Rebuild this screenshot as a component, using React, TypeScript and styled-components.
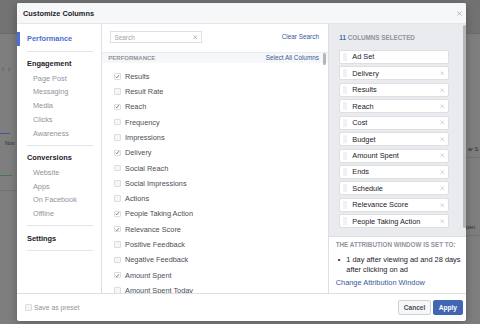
import React from 'react'
import styled, { createGlobalStyle, css } from 'styled-components'

const GlobalStyle = createGlobalStyle`
	html, body {
		margin: 0;
		padding: 0;
	}
	body {
		width: 480px;
		height: 324px;
		overflow: hidden;
		background: #7e7e7e;
		font-family: "Liberation Sans", Arial, sans-serif;
	}
	* {
		box-sizing: border-box;
	}
`

// BACKGROUND PAGE (seen through the overlay)
const Screen = styled.div`
	position: relative;
	width: 480px;
	height: 324px;
	overflow: hidden;
	background: #7e7e7e;
`
const BgTop = styled.div`
	height: 34px;
	background: #727272;
	border-bottom: 1px solid #6b6b6b;
`
const BgRow = styled.div`
	display: flex;
	justify-content: space-between;
`
const BgStrip = styled.div<{ w: number }>`
	width: ${({ w }) => w}px;
	display: flex;
	flex-direction: column;
`
const BgText = styled.div<{ mt: number; ml: number; color: string }>`
	margin-top: ${({ mt }) => mt}px;
	margin-left: ${({ ml }) => ml}px;
	font-size: 5.5px;
	line-height: 7px;
	color: ${({ color }) => color};
	white-space: nowrap;
`
const BgLine = styled.div<{ mt: number; w: number; color: string }>`
	margin-top: ${({ mt }) => mt}px;
	width: ${({ w }) => w}px;
	height: 1px;
	background: ${({ color }) => color};
`

// MODAL
const Overlay = styled.div`
	position: absolute;
	inset: 0;
	display: flex;
	align-items: flex-start;
	padding: 3px 0 0 17px;
`
const Modal = styled.div`
	width: 449px;
	height: 318px;
	background: #fff;
	border-radius: 2px;
	box-shadow: 0 2px 8px rgba(0, 0, 0, 0.25);
	display: flex;
	flex-direction: column;
	overflow: hidden;
`
const Header = styled.div`
	flex: none;
	height: 21px;
	display: flex;
	align-items: center;
	justify-content: space-between;
	padding: 0 4px 0 6px;
	background: #f6f7f9;
	border-bottom: 1px solid #e5e6e9;
`
const Title = styled.div`
	font-size: 7.4px;
	font-weight: bold;
	color: #1d2129;
`
const Body = styled.div`
	flex: 1;
	display: flex;
	min-height: 0;
`

// LEFT NAV
const Nav = styled.div`
	flex: none;
	width: 85px;
	border-right: 1px solid #dddfe2;
	padding-top: 2.8px;
`
const NavSection = styled.div`
	margin: 0 8px 0 10px;
	padding: 5.5px 0 4.5px;
	border-bottom: 1px solid #e5e6e9;
`
const NavHeading = styled.div<{ $active?: boolean }>`
	position: relative;
	font-size: 7.4px;
	font-weight: bold;
	line-height: 13.7px;
	color: ${({ $active }) => ($active ? '#4b6fd5' : '#1d2129')};
	${({ $active }) =>
		$active &&
		css`
			&::before {
				content: '';
				position: absolute;
				left: -10px;
				top: 0;
				bottom: 0;
				width: 2.5px;
				background: #4b6fd5;
			}
		`}
`
const NavItems = styled.div`
	padding-top: 1px;
`
const NavItem = styled.div`
	padding-left: 6px;
	font-size: 7.3px;
	line-height: 13.7px;
	color: #90949c;
`

// MIDDLE
const Middle = styled.div`
	flex: none;
	width: 227px;
	border-right: 1px solid #dddfe2;
	display: flex;
	flex-direction: column;
`
const SearchRow = styled.div`
	flex: none;
	height: 27.7px;
	padding: 7px 9px 0 8px;
	display: flex;
	justify-content: space-between;
	align-items: flex-start;
`
const SearchBox = styled.div`
	width: 92px;
	height: 12.3px;
	border: 1px solid #dddfe2;
	display: flex;
	align-items: center;
	justify-content: space-between;
	padding: 0 4px 0 3.5px;
	font-size: 6.4px;
	color: #a0a3a9;
`
const Link = styled.div`
	font-size: 6.4px;
	color: #365899;
	line-height: 12.3px;
	white-space: nowrap;
`
const ListArea = styled.div`
	position: relative;
	flex: 1;
	overflow: hidden;
`
const Band = styled.div`
	height: 11.6px;
	background: #f6f7f9;
	border-top: 1px solid #e9ebee;
	display: flex;
	align-items: center;
	justify-content: space-between;
	padding: 0 9px 0 6.3px;
`
const SmallCaps = styled.div`
	font-size: 6px;
	font-weight: bold;
	color: #90949c;
	white-space: nowrap;
`
const Options = styled.div`
	padding: 5.35px 0 0 12.3px;
`
const Option = styled.div`
	height: 15.31px;
	display: flex;
	align-items: center;
	gap: 4.2px;
	font-size: 7.35px;
	color: #4b4f56;
	white-space: nowrap;
`
const Box = styled.span<{ $checked?: boolean }>`
	flex: none;
	width: 6.5px;
	height: 6.5px;
	border: 1px solid #dadde1;
	border-radius: 1px;
	background: ${({ $checked }) => ($checked ? '#fff' : '#f5f6f7')};
	display: flex;
	align-items: center;
	justify-content: center;
`
const Thumb = styled.div<{ top: number; right: number; h: number }>`
	position: absolute;
	top: ${({ top }) => top}px;
	right: ${({ right }) => right}px;
	width: 3.4px;
	height: ${({ h }) => h}px;
	border-radius: 2px;
	background: #b4b6ba;
`

// RIGHT
const Right = styled.div`
	flex: 1;
	display: flex;
	flex-direction: column;
`
const Selected = styled.div`
	position: relative;
	flex: none;
	height: 212px;
	background: #e9ebee;
	padding: 10.3px 0 0 10.3px;
`
const SelectedTitle = styled.div`
	font-size: 6.3px;
	font-weight: bold;
	line-height: 8px;
	color: #90949c;
	margin-bottom: 7.7px;
	span {
		color: #4267b2;
	}
`
const Chip = styled.div`
	width: 110px;
	height: 14px;
	margin-bottom: 2.43px;
	background: #fff;
	border: 1px solid #dddfe2;
	border-radius: 2px;
	display: flex;
	align-items: center;
	padding: 0 4px 0 3px;
	font-size: 7.35px;
	color: #1d2129;
	white-space: nowrap;
`
const ChipLabel = styled.span`
	flex: 1;
	margin-left: 5px;
`
const Attribution = styled.div`
	flex: 1;
	border-top: 1px solid #dddfe2;
	padding: 4px 3px 0 6.7px;
`
const AttrTitle = styled.div`
	font-size: 6.3px;
	font-weight: bold;
	line-height: 8px;
	color: #90949c;
	white-space: nowrap;
`
const Bullet = styled.div`
	display: flex;
	margin-top: 6.3px;
	font-size: 7.4px;
	line-height: 9.3px;
	color: #1d2129;
`
const Dot = styled.span`
	flex: none;
	width: 10.6px;
	padding-left: 2px;
`
const AttrLink = styled.div`
	margin-top: 4px;
	font-size: 7.4px;
	line-height: 9.4px;
	color: #365899;
	white-space: nowrap;
`

// FOOTER
const Footer = styled.div`
	flex: none;
	height: 28px;
	border-top: 1px solid #dddfe2;
	display: flex;
	align-items: center;
	justify-content: space-between;
	padding: 0 3.3px 0 8px;
`
const Preset = styled.div`
	display: flex;
	align-items: center;
	gap: 2.5px;
	font-size: 6.8px;
	color: #90949c;
`
const Buttons = styled.div`
	display: flex;
	gap: 2px;
`
const Button = styled.div<{ primary?: boolean; w: number }>`
	width: ${({ w }) => w}px;
	height: 15.3px;
	border-radius: 2px;
	display: flex;
	align-items: center;
	justify-content: center;
	font-size: 6.6px;
	font-weight: bold;
	${({ primary }) =>
		primary
			? css`
					background: #4267b2;
					border: 1px solid #4267b2;
					color: #fff;
			  `
			: css`
					background: #f6f7f9;
					border: 1px solid #ced0d4;
					color: #4b4f56;
			  `}
`

const Cross = ({ size = 5, color = '#90949c' }: { size?: number; color?: string }) => (
	<svg width={size} height={size} viewBox='0 0 10 10' style={{ flex: 'none' }}>
		<path d='M1 1L9 9M9 1L1 9' stroke={color} strokeWidth={1.6} fill='none' />
	</svg>
)

const Check = () => (
	<svg width={5} height={5} viewBox='0 0 10 10'>
		<path d='M1.5 5.5L4 8L8.8 2' stroke='#4b4f56' strokeWidth={1.6} fill='none' />
	</svg>
)

const Handle = () => (
	<svg width={4} height={8} viewBox='0 0 4 8' style={{ flex: 'none' }}>
		{[1, 3, 5, 7].map(y =>
			[1, 3].map(x => <circle key={`${x}-${y}`} cx={x} cy={y} r={0.6} fill='#bec2c9' />)
		)}
	</svg>
)

const NAV = [
	{ title: 'Performance', active: true, items: [] as string[] },
	{ title: 'Engagement', items: ['Page Post', 'Messaging', 'Media', 'Clicks', 'Awareness'] },
	{ title: 'Conversions', items: ['Website', 'Apps', 'On Facebook', 'Offline'] },
	{ title: 'Settings', items: [] as string[] },
]

const OPTIONS: [string, boolean][] = [
	['Results', true],
	['Result Rate', false],
	['Reach', true],
	['Frequency', false],
	['Impressions', false],
	['Delivery', true],
	['Social Reach', false],
	['Social Impressions', false],
	['Actions', false],
	['People Taking Action', true],
	['Relevance Score', true],
	['Positive Feedback', false],
	['Negative Feedback', false],
	['Amount Spent', true],
	['Amount Spent Today', false],
]

const SELECTED = [
	'Ad Set',
	'Delivery',
	'Results',
	'Reach',
	'Cost',
	'Budget',
	'Amount Spent',
	'Ends',
	'Schedule',
	'Relevance Score',
	'People Taking Action',
]

export default function App() {
	return (
		<Screen>
			<GlobalStyle />
			<BgTop />
			<BgRow>
				<BgStrip w={17}>
					<BgText mt={32} ml={2} color='#2f6b3f'>t &nbsp;&nbsp;<b style={{ color: '#2a2a2a' }}>:</b></BgText>
					<BgLine mt={60} w={10} color='#3f5a8f' />
					<BgText mt={6} ml={5} color='#2d2d2d'>Nov</BgText>
					<BgLine mt={28} w={12} color='#3c7a50' />
					<BgLine mt={14} w={17} color='#707070' />
				</BgStrip>
				<BgStrip w={14}>
					<BgText mt={112} ml={2} color='#2d2d2d'>ar S</BgText>
					<BgLine mt={4} w={14} color='#717171' />
					<BgText mt={66} ml={0} color='#2d2d2d'>pen</BgText>
					<BgLine mt={4} w={14} color='#717171' />
				</BgStrip>
			</BgRow>
			<Overlay>
				<Modal>
					<Header>
						<Title>Customize Columns</Title>
						<Cross size={5} color='#a0a3a9' />
					</Header>
					<Body>
						<Nav>
							{NAV.map(s => (
								<NavSection key={s.title}>
									<NavHeading $active={s.active}>{s.title}</NavHeading>
									{s.items.length > 0 && (
										<NavItems>
											{s.items.map(i => (
												<NavItem key={i}>{i}</NavItem>
											))}
										</NavItems>
									)}
								</NavSection>
							))}
						</Nav>
						<Middle>
							<SearchRow>
								<SearchBox>
									Search
									<Cross size={4.5} color='#a0a3a9' />
								</SearchBox>
								<Link>Clear Search</Link>
							</SearchRow>
							<ListArea>
								<Band>
									<SmallCaps>PERFORMANCE</SmallCaps>
									<Link>Select All Columns</Link>
								</Band>
								<Options>
									{OPTIONS.map(([label, checked]) => (
										<Option key={label}>
											<Box $checked={checked}>{checked && <Check />}</Box>
											{label}
										</Option>
									))}
								</Options>
								<Thumb top={1.6} right={1.7} h={11.7} />
							</ListArea>
						</Middle>
						<Right>
							<Selected>
								<SelectedTitle>
									<span>11</span> COLUMNS SELECTED
								</SelectedTitle>
								{SELECTED.map((c, k) => (
									<Chip key={c}>
										<Handle />
										<ChipLabel>{c}</ChipLabel>
										{k > 0 && <Cross size={4.5} color='#bec2c9' />}
									</Chip>
								))}
								<Thumb top={1} right={0} h={203} />
							</Selected>
							<Attribution>
								<AttrTitle>THE ATTRIBUTION WINDOW IS SET TO:</AttrTitle>
								<Bullet>
									<Dot>•</Dot>
									<span>1 day after viewing ad and 28 days after clicking on ad</span>
								</Bullet>
								<AttrLink>Change Attribution Window</AttrLink>
							</Attribution>
						</Right>
					</Body>
					<Footer>
						<Preset>
							<Box />
							Save as preset
						</Preset>
						<Buttons>
							<Button w={33}>Cancel</Button>
							<Button primary w={29.7}>Apply</Button>
						</Buttons>
					</Footer>
				</Modal>
			</Overlay>
		</Screen>
	)
}
